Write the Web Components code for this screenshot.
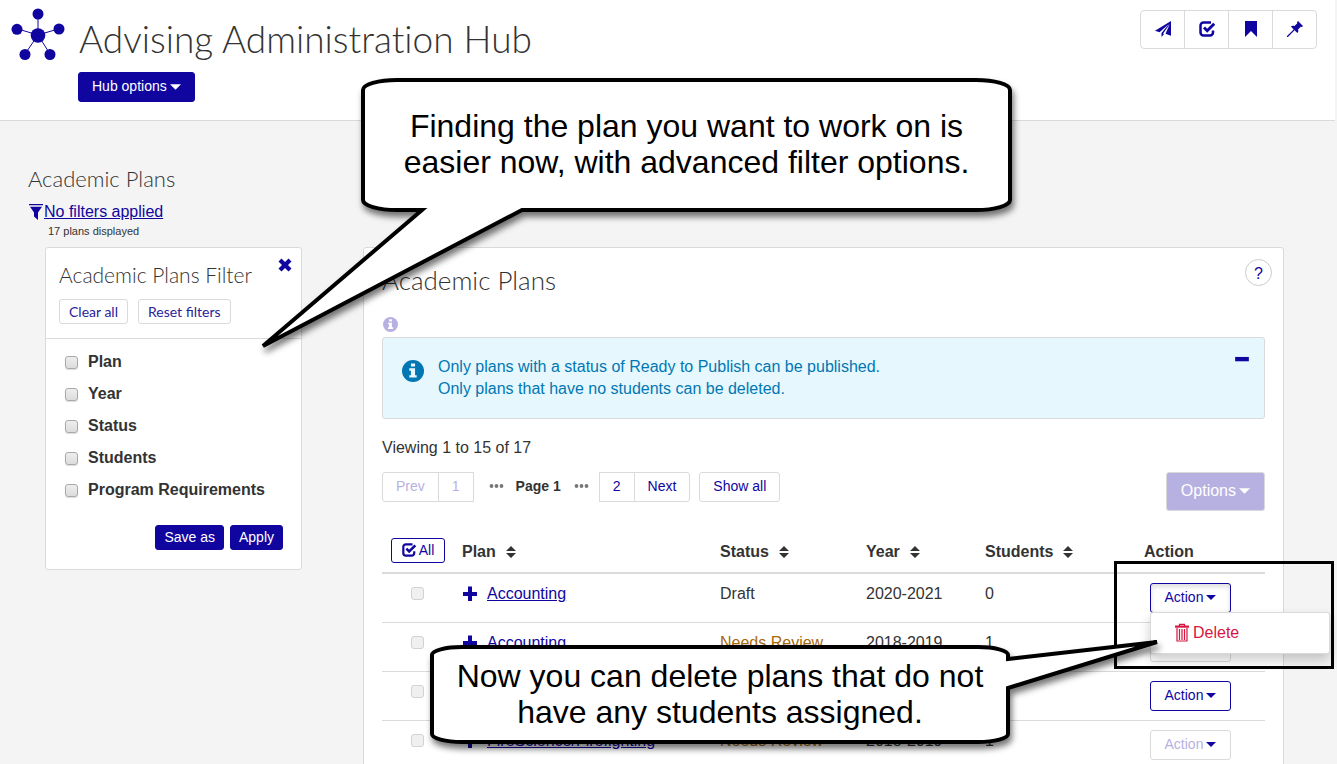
<!DOCTYPE html>
<html lang="en">
<head>
<meta charset="utf-8">
<title>Advising Administration Hub</title>
<style>
  html { scrollbar-width: none; }
  body {
    margin: 0;
    min-height: 100vh;
    background: #f4f4f4;
    color: #333;
    font: 16px/22px "Liberation Sans", Arial, sans-serif;
    --brand: #10069f;
    --brand-faded: #b7b1e2;
    --line: #dadada;
    --display: Lato, "Open Sans", sans-serif;
  }
</style>
</head>
<body>
<advising-app></advising-app>

<script>
const base = `
  *, *::before, *::after { box-sizing: border-box; }
  h1, h2, h3, p, ul { margin: 0; padding: 0; font-weight: inherit; }
  h1, h2, h3 { font-variant-ligatures: none !important; }
  a { color: var(--brand); }
  button { font: inherit; margin: 0; cursor: pointer; }
  input[type=checkbox] {
    appearance: none; flex: none; width: 13px; height: 13px; margin: 0;
    border: 1px solid #a9a9a9; border-radius: 3px;
    background: linear-gradient(#eee, #dcdcdc);
    box-shadow: 0 1px 1px #0002;
  }
  input[type=checkbox]:disabled { border-color: #d2d2d2; background: #f0f0f0; box-shadow: none; }
`;

const define = (name, html, setup) => {
  const template = document.createElement('template');
  template.innerHTML = html;
  customElements.define(name, class extends HTMLElement {
    constructor() {
      super();
      this.attachShadow({ mode: 'open' }).append(template.content.cloneNode(true));
    }
    connectedCallback() { if (setup) setup.call(this, this.shadowRoot); }
  });
};

/* Icons: [viewBox, markup] */
const icons = {
  hub: ['0 0 54 54', '<g stroke="currentColor" stroke-width="1"><path d="M27 27V6M27 27 7 21M27 27 47 21M27 27 14 46M27 27 39 46"/></g><circle cx="27" cy="27.5" r="7.3"/><circle cx="27" cy="6" r="5.5"/><circle cx="6" cy="21.3" r="5.5"/><circle cx="48" cy="21" r="5.5"/><circle cx="14" cy="46.5" r="5.5"/><circle cx="39" cy="46.5" r="5.5"/>'],
  send: ['0 0 16 16', '<path d="M16 0 0 9.800 4.500 11.200 14 3 6.500 12v4L9 13.200l-.8-.7L14.800 3 10.500 12.800 16 14.800z"/>'],
  check: ['0 0 16 16', '<path fill="none" stroke="currentColor" stroke-width="2.500" d="M12 1.500H4.500a3 3 0 0 0-3 3v7a3 3 0 0 0 3 3h6.500a3 3 0 0 0 3-3V9.500"/><path fill="none" stroke="currentColor" stroke-width="2.800" d="m5 6.500 3.200 3.200 7-7"/>'],
  bookmark: ['0 0 16 16', '<path d="M2 0h12v16L8 10l-6 6z"/>'],
  pin: ['0 0 16 16', '<path d="m11 0 5 5-1 1-1.200-.3L11 8.500c.6 1.500.4 2.600-.6 3.600L7.600 9.300 1 16H0v-1l6.700-6.600L3.900 5.600c1-1 2.200-1.200 3.600-.6l2.800-2.800L10 1z"/>'],
  funnel: ['0 0 16 16', '<path d="M1 0h14v1.200H1zM2 2.800h12L10 8.500V16L6 12.500v-4z"/>'],
  close: ['0 0 14 14', '<path d="M3.500.5 7 4 10.500.5l3 3L10 7l3.500 3.500-3 3L7 10l-3.500 3.500-3-3L4 7 .5 3.500z"/>'],
  info: ['0 0 16 16', '<circle cx="8" cy="8" r="8"/><path fill="var(--mark, #fff)" d="M6.500 2.500h3v2.300h-3zM5.300 6h4.200v5h1.200v1.800H5.300V11h1.200V7.800H5.300z"/>'],
  minus: ['0 0 14 14', '<path d="M1 5.200h12v3.800H1z"/>'],
  plus: ['0 0 16 16', '<path d="M6 .5h4V6h5v4h-5v5H6v-5H1V6h5z"/>'],
  dots: ['0 0 16 16', '<circle cx="3.500" cy="8" r="1.900"/><circle cx="8.500" cy="8" r="1.900"/><circle cx="13.500" cy="8" r="1.900"/>'],
  sort: ['0 0 12 16', '<path d="m6 2 5 5H1zM6 14l5-5H1z"/>'],
  caret: ['0 0 10 10', '<path d="M0 3h10L5 8z"/>'],
  trash: ['0 0 16 20', '<path fill="none" stroke="currentColor" stroke-width="1.200" d="M5.500 3V1.300h5V3M3 5v13h10V5M5.500 6v11M8 6v11M10.500 6v11"/><path d="M1 2.500h14v2.200H1z"/>']
};
define('ui-icon', `<style>
  :host { display: inline-block; flex: none; width: 16px; height: 16px; }
  svg { display: block; width: 100%; height: 100%; fill: currentColor; }
</style><svg aria-hidden="true"></svg>`, function (root) {
  const [box, markup] = icons[this.getAttribute('name')];
  const svg = root.querySelector('svg');
  svg.setAttribute('viewBox', box);
  svg.innerHTML = markup;
});

/* Button: kinds are solid, outline, plain; sizes are small, medium, large */
define('ui-button', `<style>${base}
  :host { display: block; flex: none; }
  button {
    display: flex; align-items: center; justify-content: center; gap: 3px;
    width: 100%; height: 30px; padding: 0 13px 2px; white-space: nowrap;
    border: 1px solid var(--line); border-radius: 3px;
    background: #fff; color: var(--brand); font-size: 14px;
  }
  :host([kind=solid]) button { background: var(--brand); border-color: var(--brand); color: #fff; }
  :host([kind=outline]) button { border-color: var(--brand); }
  :host([size=small]) button { height: 25px; padding: 0 8px 1px; }
  :host([size=large]) button { height: 39px; padding: 0 14px 2px; font-size: 16px; }
  :host([open]) button { box-shadow: inset 0 3px 5px #0002; }
  :host([off]) button { color: var(--brand-faded); border-color: var(--line); }
  :host([off][kind=solid]) button { color: #fff; background: var(--brand-faded); }
  :host([join=left]) button { border-radius: 3px 0 0 3px; }
  :host([join=right]) button { border-radius: 0 3px 3px 0; }
  :host([join=none]) button { border-radius: 0; }
  :host([display][size=small]) button { padding: 0 9px; font-family: var(--display); color: #2a2299; }
</style><button type="button"><slot></slot></button>`, function (root) {
  root.querySelector('button').disabled = this.hasAttribute('off');
});

define('hub-header', `<style>${base}
  :host { display: block; margin-right: 2px; background: #fff; border-bottom: 1px solid var(--line); }
  header { display: flex; align-items: flex-start; min-height: 120px; padding: 8px 18px 18px 11px; }
  .logo { width: 54px; height: 54px; color: var(--brand); }
  .title { flex: 1; display: flex; flex-direction: column; align-items: flex-start; gap: 9px; padding: 7px 0 0 13px; }
  h1 { margin-left: 1px; font: 300 37px/48px var(--display); }
  .tools { display: flex; margin-top: 2px; border: 1px solid var(--line); border-radius: 4px; }
  .tools button { display: flex; align-items: center; justify-content: center; width: 44px; height: 37px; padding: 0 0 2px; border: 0; background: none; color: var(--brand); }
  .tools button:first-child { width: 43px; }
  .tools button + button { border-left: 1px solid var(--line); }
</style>
<header>
  <ui-icon class="logo" name="hub"></ui-icon>
  <div class="title">
    <h1>Advising Administration Hub</h1>
    <ui-button kind="solid">Hub options<ui-icon name="caret" style="width:11px;height:11px"></ui-icon></ui-button>
  </div>
  <div class="tools">
    <button type="button" aria-label="Send"><ui-icon name="send"></ui-icon></button>
    <button type="button" aria-label="Tasks"><ui-icon name="check"></ui-icon></button>
    <button type="button" aria-label="Bookmark"><ui-icon name="bookmark"></ui-icon></button>
    <button type="button" aria-label="Pin"><ui-icon name="pin"></ui-icon></button>
  </div>
</header>`);

define('plans-filter', `<style>${base}
  :host { display: block; }
  h2 { font: 300 22px/26px var(--display); }
  h3 { font: 300 21px/26px var(--display); }
  .applied { display: flex; align-items: center; margin-top: 8px; height: 24px; }
  .applied ui-icon { color: var(--brand); }
  .count { margin-left: 20px; font-size: 11px; line-height: 14px; }
  .card { margin: 9px 0 0 17px; background: #fff; border: 1px solid var(--line); border-radius: 3px; }
  .head { position: relative; padding: 14px 13px; border-bottom: 1px solid var(--line); }
  .row { display: flex; gap: 10px; margin-top: 11px; }
  .close { position: absolute; top: 10px; right: 9px; display: flex; padding: 0; border: 0; background: none; color: var(--brand); }
  .close ui-icon { width: 14px; height: 14px; }
  ul { list-style: none; padding: 7px 19px 0; }
  label { display: flex; align-items: center; gap: 10px; height: 32px; font-weight: bold; }
  .foot { display: flex; justify-content: flex-end; gap: 6px; padding: 19px 18px; }
</style>
<h2>Academic Plans</h2>
<div class="applied"><ui-icon name="funnel"></ui-icon><a href="#filters">No filters applied</a></div>
<p class="count">17 plans displayed</p>
<form class="card">
  <div class="head">
    <h3>Academic Plans Filter</h3>
    <button class="close" type="button" aria-label="Close"><ui-icon name="close"></ui-icon></button>
    <div class="row">
      <ui-button size="small" display>Clear all</ui-button>
      <ui-button size="small" display>Reset filters</ui-button>
    </div>
  </div>
  <ul>
    <li><label><input type="checkbox">Plan</label></li>
    <li><label><input type="checkbox">Year</label></li>
    <li><label><input type="checkbox">Status</label></li>
    <li><label><input type="checkbox">Students</label></li>
    <li><label><input type="checkbox">Program Requirements</label></li>
  </ul>
  <div class="foot">
    <ui-button kind="solid" size="small">Save as</ui-button>
    <ui-button kind="solid" size="small">Apply</ui-button>
  </div>
</form>`);

define('info-alert', `<style>${base}
  :host { display: flex; align-items: flex-start; gap: 14px; min-height: 82px; padding: 18px 14px 18px 19px; color: #0077b3; background: #e7f7fe; border: 1px solid var(--line); border-radius: 3px; --mark: #e7f7fe; }
  .mark { width: 22px; height: 22px; margin-top: 4px; }
  .text { flex: 1; }
  button { display: flex; padding: 0; border: 0; background: none; color: var(--brand); margin-top: -5px; }
</style>
<ui-icon class="mark" name="info"></ui-icon>
<div class="text"><slot></slot></div>
<button type="button" aria-label="Collapse"><ui-icon name="minus"></ui-icon></button>`);

define('plans-pager', `<style>${base}
  :host { display: flex; align-items: center; }
  .join { display: flex; }
  .join ui-button + ui-button { margin-left: -1px; }
  .page { display: flex; align-items: center; gap: 12px; margin: 0 10px 2px 14px; font-size: 14px; font-weight: bold; }
  .page ui-icon { color: #777; }
  .all { margin-left: 9px; }
</style>
<div class="join"><ui-button join="left" off>Prev</ui-button><ui-button join="none" off>1</ui-button></div>
<div class="page"><ui-icon name="dots"></ui-icon>Page 1<ui-icon name="dots"></ui-icon></div>
<div class="join"><ui-button join="none">2</ui-button><ui-button join="right">Next</ui-button></div>
<ui-button class="all">Show all</ui-button>`);

define('action-menu', `<style>${base}
  :host { display: block; position: relative; width: 81px; }
  ui-icon { width: 10px; height: 10px; color: var(--brand); }
  .menu { display: none; position: absolute; z-index: 2; top: 29px; left: 0; width: 180px; height: 42px; padding: 9px 23px; list-style: none; background: #fff; border: 1px solid var(--line); border-radius: 3px; box-shadow: 0 6px 12px #0003; }
  :host([open]) .menu { display: block; }
  .menu button { display: flex; align-items: center; gap: 3px; height: 22px; padding: 0; border: 0; background: none; color: #d8153f; }
  .menu ui-icon { width: 16px; height: 20px; color: inherit; }
</style>
<ui-button>Action<ui-icon name="caret"></ui-icon></ui-button>
<ul class="menu"><li><button type="button"><ui-icon name="trash"></ui-icon>Delete</button></li></ul>`, function (root) {
  const button = root.querySelector('ui-button');
  if (this.hasAttribute('off')) button.setAttribute('off', '');
  else button.setAttribute('kind', 'outline');
  if (this.hasAttribute('open')) button.setAttribute('open', '');
  button.shadowRoot.querySelector('button').disabled = this.hasAttribute('off');
});

const plans = [
  { name: 'Accounting', status: 'Draft', year: '2020-2021', students: '0', open: true },
  { name: 'Accounting', status: 'Needs Review', year: '2018-2019', students: '1' },
  { name: '', status: '', year: '', students: '', deletable: true },
  { name: 'FireScience/Firefighting', status: 'Needs Review', year: '2018-2019', students: '1' }
];
define('plans-table', `<style>${base}
  :host { display: block; }
  table { width: 100%; table-layout: fixed; border-collapse: separate; border-spacing: 0; }
  th { height: 45px; padding: 2px 8px 0; text-align: left; border-bottom: 2px solid var(--line); }
  th span { display: flex; align-items: center; gap: 9px; }
  th ui-icon { width: 12px; }
  th ui-button { width: 54px; margin: -3px 0 0 1px; font-weight: normal; }
  th ui-button ui-icon { width: 14px; height: 14px; }
  td { height: 49px; padding: 9px 8px 0; vertical-align: top; border-bottom: 1px solid var(--line); }
  .tick { width: 72px; } .status { width: 146px; } .year { width: 119px; } .students { width: 159px; } .action { width: 129px; }
  td:first-child { padding: 13px 29px 0; }
  td input { display: block; }
  td:last-child { padding: 9px 0 0 14px; }
  .plan { display: flex; align-items: center; gap: 9px; }
  .plan ui-icon { color: var(--brand); }
  .review { color: #a8690a; }
</style>
<table>
  <thead><tr>
    <th class="tick"><ui-button kind="outline" size="small"><ui-icon name="check"></ui-icon>All</ui-button></th>
    <th><span>Plan<ui-icon name="sort"></ui-icon></span></th>
    <th class="status"><span>Status<ui-icon name="sort"></ui-icon></span></th>
    <th class="year"><span>Year<ui-icon name="sort"></ui-icon></span></th>
    <th class="students"><span>Students<ui-icon name="sort"></ui-icon></span></th>
    <th class="action">Action</th>
  </tr></thead>
  <tbody></tbody>
</table>`, function (root) {
  root.querySelector('tbody').innerHTML = plans.map(p => `<tr>
    <td><input type="checkbox" aria-label="Select plan" disabled></td>
    <td><div class="plan"><ui-icon name="plus"></ui-icon><a href="#plan">${p.name}</a></div></td>
    <td class="${p.status === 'Needs Review' ? 'review' : ''}">${p.status}</td>
    <td>${p.year}</td>
    <td>${p.students}</td>
    <td><action-menu ${p.open ? 'open' : p.deletable ? '' : 'off'}></action-menu></td>
  </tr>`).join('');
});

define('plans-card', `<style>${base}
  :host { display: block; padding: 10px 18px 24px; background: #fff; border: 1px solid var(--line); border-radius: 3px; }
  .top { display: flex; justify-content: space-between; align-items: flex-start; margin-right: -7px; }
  h2 { margin-top: 7px; font: 300 26px/30px var(--display); }
  .help { width: 27px; height: 27px; margin-top: 1px; padding: 2px 0 0; border: 1px solid #ccc; border-radius: 50%; background: #fff; color: var(--brand); }
  .hint { display: block; width: 15px; height: 15px; margin: 22px 0 5px 1px; color: var(--brand-faded); }
  .view { margin: 18px 0 13px; }
  .bar { display: flex; justify-content: space-between; align-items: flex-start; margin-bottom: 18px; }
</style>
<div class="top"><h2>Academic Plans</h2><button class="help" type="button">?</button></div>
<ui-icon class="hint" name="info"></ui-icon>
<info-alert><p>Only plans with a status of Ready to Publish can be published.</p><p>Only plans that have no students can be deleted.</p></info-alert>
<p class="view">Viewing 1 to 15 of 17</p>
<div class="bar">
  <plans-pager></plans-pager>
  <ui-button kind="solid" size="large" off>Options<ui-icon name="caret" style="width:11px;height:11px"></ui-icon></ui-button>
</div>
<plans-table></plans-table>`);

/* Speech bubble laid over the page; the outline and its tail come from the path attribute */
define('callout-bubble', `<style>
  :host { position: absolute; z-index: 5; display: flex; align-items: center; justify-content: center; text-align: center; color: #000; font-size: 32px; line-height: 36px; }
  svg { position: absolute; inset: 0; width: 100%; height: 100%; overflow: visible; filter: drop-shadow(2px 5px 3px #0008); }
  path { fill: #fff; stroke: #000; stroke-width: 4; }
  div { position: relative; }
</style><svg aria-hidden="true"><path/></svg><div><slot></slot></div>`, function (root) {
  root.querySelector('path').setAttribute('d', this.getAttribute('path'));
});

define('advising-app', `<style>${base}
  :host { display: block; position: relative; }
  main { display: grid; grid-template-columns: 274px minmax(0, 1fr); gap: 61px; padding: 45px 53px 0 28px; }
  plans-card { margin-top: 81px; }
  .filters { left: 361px; top: 78px; width: 651px; height: 134px; padding-bottom: 2px; box-sizing: border-box; }
  .deleting { left: 430px; top: 645px; width: 580px; height: 99px; padding-bottom: 2px; box-sizing: border-box; }
  .frame { position: absolute; z-index: 4; left: 1114px; top: 561px; width: 220px; height: 108px; border: 3px solid #000; }
</style>
<hub-header></hub-header>
<main><plans-filter></plans-filter><plans-card></plans-card></main>
<div class="frame"></div>
<callout-bubble class="filters" path="M36 2H615A34 10 0 0 1 649 12V122A34 10 0 0 1 615 132H161L-98 268L61 132H36A34 10 0 0 1 2 122V12A34 10 0 0 1 36 2Z">Finding the plan you want to work on is<br>easier now, with advanced filter options.</callout-bubble>
<callout-bubble class="deleting" path="M32 2H548A30 8 0 0 1 578 10V14L727 -3L578 43V89A30 8 0 0 1 548 97H32A30 8 0 0 1 2 89V10A30 8 0 0 1 32 2Z">Now you can delete plans that do not<br>have any students assigned.</callout-bubble>`);
</script>
</body>
</html>
